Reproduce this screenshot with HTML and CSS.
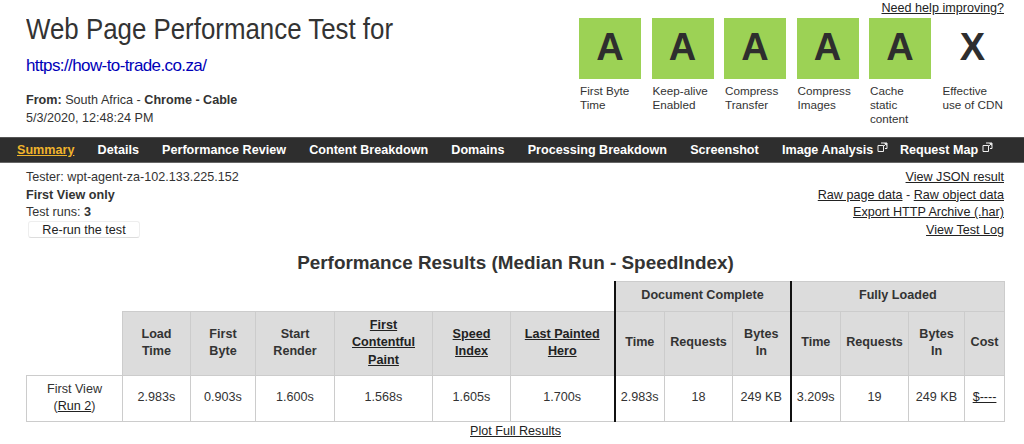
FILE: index.html
```html
<!DOCTYPE html>
<html lang="en">
<head>
<meta charset="utf-8">
<title>Web Page Performance Test</title>
<link rel="stylesheet" href="styles.css">
</head>
<body>
<header class="head">
  <div class="intro">
    <h1 class="title">Web Page Performance Test for</h1>
    <a class="url" href="#">https://how-to-trade.co.za/</a>
    <p class="from"><b>From:</b> South Africa - <b>Chrome - Cable</b><br>5/3/2020, 12:48:24 PM</p>
  </div>
  <div class="scores">
    <a class="help" href="#">Need help improving?</a>
    <ul class="grades">
      <li class="grade"><span class="box pass">A</span><span class="lbl">First Byte<br>Time</span></li>
      <li class="grade"><span class="box pass">A</span><span class="lbl">Keep-alive<br>Enabled</span></li>
      <li class="grade"><span class="box pass">A</span><span class="lbl">Compress<br>Transfer</span></li>
      <li class="grade"><span class="box pass">A</span><span class="lbl">Compress<br>Images</span></li>
      <li class="grade"><span class="box pass">A</span><span class="lbl">Cache<br>static<br>content</span></li>
      <li class="grade"><span class="box">X</span><span class="lbl">Effective<br>use of CDN</span></li>
    </ul>
  </div>
</header>
<nav class="nav">
  <a class="on" href="#">Summary</a>
  <a href="#">Details</a>
  <a href="#">Performance Review</a>
  <a href="#">Content Breakdown</a>
  <a href="#">Domains</a>
  <a href="#">Processing Breakdown</a>
  <a href="#">Screenshot</a>
  <a class="ext" href="#">Image Analysis <svg class="exticon" viewBox="0 0 11 11"><path d="M1 3.5h5.5v6H1zM4 1h6v5.5H8M6 4.8 9.5 1.5M7.5 1.5h2v2"/></svg></a>
  <a class="ext" href="#">Request Map <svg class="exticon" viewBox="0 0 11 11"><path d="M1 3.5h5.5v6H1zM4 1h6v5.5H8M6 4.8 9.5 1.5M7.5 1.5h2v2"/></svg></a>
</nav>
<section class="meta">
  <div class="info">
    <div>Tester: wpt-agent-za-102.133.225.152</div>
    <div><b>First View only</b></div>
    <div>Test runs: <b>3</b></div>
    <button class="rerun" type="button">Re-run the test</button>
  </div>
  <div class="links">
    <div><a href="#">View JSON result</a></div>
    <div><a href="#">Raw page data</a> - <a href="#">Raw object data</a></div>
    <div><a href="#">Export HTTP Archive (.har)</a></div>
    <div><a href="#">View Test Log</a></div>
  </div>
</section>
<h2 class="results">Performance Results (Median Run - SpeedIndex)</h2>
<table class="tbl">
  <colgroup>
    <col class="c1"><col class="c2"><col class="c3"><col class="c4"><col class="c5"><col class="c6"><col class="c7">
    <col class="c8"><col class="c9"><col class="c10"><col class="c11"><col class="c12"><col class="c13"><col class="c14">
  </colgroup>
  <tr class="r1">
    <td class="blank" colspan="7"></td>
    <th class="thick" colspan="3">Document Complete</th>
    <th class="thick" colspan="4">Fully Loaded</th>
  </tr>
  <tr class="r2">
    <td class="blank"></td>
    <th>Load<br>Time</th>
    <th>First<br>Byte</th>
    <th>Start<br>Render</th>
    <th><a href="#">First<br>Contentful<br>Paint</a></th>
    <th><a href="#">Speed<br>Index</a></th>
    <th><a href="#">Last Painted<br>Hero</a></th>
    <th class="thick">Time</th>
    <th>Requests</th>
    <th>Bytes<br>In</th>
    <th class="thick">Time</th>
    <th>Requests</th>
    <th>Bytes<br>In</th>
    <th>Cost</th>
  </tr>
  <tr class="r3">
    <td>First View<br>(<a href="#">Run 2</a>)</td>
    <td>2.983s</td>
    <td>0.903s</td>
    <td>1.600s</td>
    <td>1.568s</td>
    <td>1.605s</td>
    <td>1.700s</td>
    <td class="thick">2.983s</td>
    <td>18</td>
    <td>249 KB</td>
    <td class="thick">3.209s</td>
    <td>19</td>
    <td>249 KB</td>
    <td><a href="#">$----</a></td>
  </tr>
</table>
<div class="plot"><a href="#">Plot Full Results</a></div>
</body>
</html>
```
FILE: styles.css
```css
* { box-sizing: border-box; }
html, body { margin: 0; padding: 0; }
body {
  width: 1024px;
  height: 444px;
  overflow: hidden;
  background: #fff;
  color: #333;
  font-family: "Liberation Sans", Arial, sans-serif;
  font-size: 12.6px;
  line-height: 17.7px;
}
a { color: #222; text-decoration: underline; }
.head {
  display: flex;
  justify-content: space-between;
  height: 137px;
  padding: 0 20px 0 26px;
}
.intro { width: 400px; }
.title {
  margin: 11px 0 0;
  font-size: 30px;
  line-height: 36px;
  font-weight: 400;
  color: #333;
  white-space: nowrap;
  transform: scaleX(0.862);
  transform-origin: left center;
}
.url {
  display: block;
  margin-top: 9px;
  font-size: 17px;
  line-height: 20px;
  letter-spacing: -0.6px;
  color: #0000b8;
  text-decoration: none;
}
.from { margin: 16px 0 0; }
.scores { width: 445px; display: flex; flex-direction: column; align-items: flex-end; }
.help { line-height: 14px; margin-top: 1px; margin-bottom: 3px; }
.grades {
  display: grid;
  grid-template-columns: repeat(6, 62px);
  column-gap: 10.5px;
  margin: 0;
  padding: 0;
  list-style: none;
  width: 425px;
  align-self: flex-end;
}
.grade { display: flex; flex-direction: column; }
.box {
  height: 61px;
  font-size: 38px;
  line-height: 59px;
  font-weight: 700;
  text-align: center;
  color: #2e2e2e;
}
.pass { background: #9cd255; }
.lbl { margin-top: 5px; padding-left: 1px; font-size: 11.7px; line-height: 14px; white-space: nowrap; }
.nav {
  display: flex;
  align-items: center;
  height: 26px;
  padding: 1px 0 0 17px;
  gap: 23.2px;
  background: #2e2e2e;
  border-top: 1px solid #555;
  border-bottom: 1px solid #666;
}
.nav a { color: #fff; font-weight: 700; text-decoration: none; white-space: nowrap; }
.nav a.on { color: #f0b42c; text-decoration: underline; }
.nav a.ext { margin-right: -11px; }
.exticon { width: 11px; height: 11px; vertical-align: 1px; fill: none; stroke: #eee; stroke-width: 1; }
.meta {
  display: flex;
  justify-content: space-between;
  padding: 6px 20px 0 26px;
}
.rerun {
  display: block;
  width: 112px;
  height: 17px;
  margin: -1px 0 0 2px;
  padding: 0;
  background: #fff;
  border: 1px solid #eee;
  border-bottom-color: #ddd;
  border-radius: 3px;
  color: #222;
  font: 12.6px "Liberation Sans", Arial, sans-serif;
}
.links { text-align: right; }
.results {
  margin: 12px 0 0 7px;
  font-size: 18.9px;
  line-height: 22px;
  text-align: center;
  color: #333;
  font-weight: 700;
}
.tbl {
  table-layout: fixed;
  border-collapse: collapse;
  width: 978px;
  margin: 7px 0 0 26px;
  text-align: center;
}
.c1 { width: 96px; } .c2 { width: 68px; } .c3 { width: 65px; } .c4 { width: 79px; }
.c5 { width: 98px; } .c6 { width: 78px; } .c7 { width: 104px; } .c8 { width: 50px; }
.c9 { width: 68px; } .c10 { width: 58px; } .c11 { width: 50px; } .c12 { width: 68px; }
.c13 { width: 56px; } .c14 { width: 40px; }
.tbl th, .tbl td { padding: 0; border: 1px solid #ccc; }
.tbl th { background: #dcdcdc; font-weight: 700; color: #333; }
.tbl th a { color: #222; }
.tbl .blank { border: 0; background: #fff; }
.tbl tr.r2 .blank { border-bottom: 1px solid #ccc; }
.tbl .thick { border-left: 2px solid #111; }
.r1 { height: 30px; }
.r2 { height: 64px; }
.r3 { height: 46px; }
.plot { text-align: center; line-height: 18px; margin-left: 7px; }
```
